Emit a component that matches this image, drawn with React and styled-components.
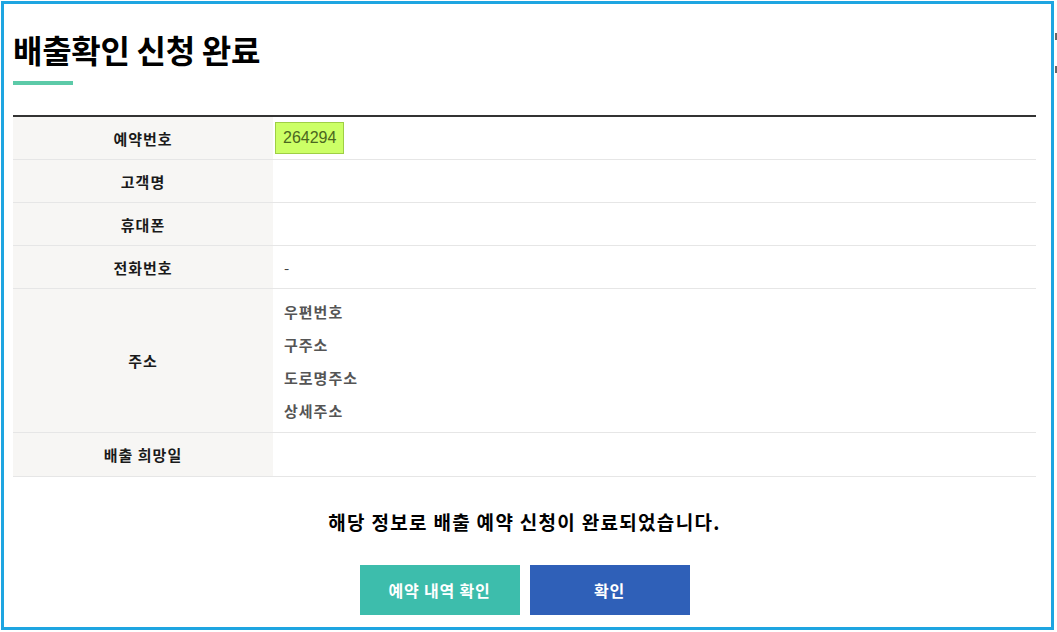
import React from "react";
import styled, { createGlobalStyle } from "styled-components";

// Global reset
const GlobalStyle = createGlobalStyle`
  html, body {
    margin: 0;
    padding: 0;
    background: #ffffff;
  }
  body {
    font-family: "Noto Sans CJK KR", "Noto Sans", sans-serif;
    color: #222;
  }
`;

const Page = styled.div`
  display: flex;
  align-items: flex-start;
  padding: 1px 0 0 1px;
`;

const Frame = styled.div`
  box-sizing: border-box;
  width: 1053px;
  height: 629px;
  border: 3px solid #1ea5e1;
  padding: 25px 15px 0 9px;
  background: #fff;
`;

const EdgeStrip = styled.div`
  display: flex;
  flex-direction: column;
  gap: 26px;
  padding: 32px 0 0 1px;
`;

const EdgeMark = styled.span`
  display: block;
  width: 2px;
  height: 7px;
  background: #666;
`;

const Title = styled.h1`
  margin: 0;
  font-size: 32px;
  line-height: 40px;
  font-weight: 700;
  color: #000;
  letter-spacing: -0.3px;
`;

const TitleBar = styled.div`
  width: 60px;
  height: 4px;
  margin-top: 12px;
  background: #5ccaa8;
`;

const Table = styled.div`
  margin-top: 30px;
  border-top: 2px solid #333;
`;

const Row = styled.div`
  display: grid;
  grid-template-columns: 260px 1fr;
  min-height: ${(p) => p.$height || 42}px;
  border-bottom: 1px solid #e6e6e6;
`;

const Label = styled.div`
  display: flex;
  align-items: center;
  justify-content: center;
  background: #f7f6f4;
  font-size: 15px;
  font-weight: 700;
  letter-spacing: 1px;
  color: #1a1a1a;
`;

const Value = styled.div`
  display: flex;
  align-items: center;
  padding-left: ${(p) => (p.$tight ? 2 : 11)}px;
  font-size: 15px;
  color: #444;
`;

const Badge = styled.span`
  display: inline-flex;
  align-items: center;
  height: 32px;
  box-sizing: border-box;
  padding: 0 7px;
  background: #ccff66;
  border: 1px solid #9fcf45;
  font-family: "Liberation Sans", Arial, sans-serif;
  font-size: 16px;
  color: #4a6620;
`;

const AddressList = styled.div`
  display: flex;
  flex-direction: column;
  padding: 6px 0 5px 11px;
`;

const AddressLine = styled.div`
  line-height: 33px;
  font-size: 15px;
  font-weight: 700;
  letter-spacing: 1px;
  color: #555;
`;

const Message = styled.p`
  margin: 32px 0 0;
  text-align: center;
  font-size: 19px;
  line-height: 26px;
  font-weight: 700;
  color: #000;
  letter-spacing: 1.3px;
`;

const Buttons = styled.div`
  display: flex;
  justify-content: center;
  gap: 10px;
  margin-top: 30px;
`;

const Button = styled.button`
  width: 160px;
  height: 50px;
  border: none;
  background: ${(p) => (p.$primary ? "#2f60b8" : "#3dbdac")};
  color: #fff;
  font-family: "Noto Sans CJK KR", "Noto Sans", sans-serif;
  font-size: 16px;
  font-weight: 700;
  letter-spacing: 0.8px;
  cursor: pointer;
`;

const rows = [
  { label: "예약번호", badge: "264294" },
  { label: "고객명", value: "" },
  { label: "휴대폰", value: "" },
  { label: "전화번호", value: "-" },
];

const addressLines = ["우편번호", "구주소", "도로명주소", "상세주소"];

const App = () => {
  return (
    <>
      <GlobalStyle />
      <Page>
        <Frame>
          <Title>배출확인 신청 완료</Title>
          <TitleBar />
          <Table>
            {rows.map((r) => (
              <Row key={r.label}>
                <Label>{r.label}</Label>
                {r.badge ? (
                  <Value $tight>
                    <Badge>{r.badge}</Badge>
                  </Value>
                ) : (
                  <Value>{r.value}</Value>
                )}
              </Row>
            ))}
            <Row $height={142}>
              <Label>주소</Label>
              <AddressList>
                {addressLines.map((line) => (
                  <AddressLine key={line}>{line}</AddressLine>
                ))}
              </AddressList>
            </Row>
            <Row $height={43}>
              <Label>배출 희망일</Label>
              <Value />
            </Row>
          </Table>
          <Message>해당 정보로 배출 예약 신청이 완료되었습니다.</Message>
          <Buttons>
            <Button>예약 내역 확인</Button>
            <Button $primary>확인</Button>
          </Buttons>
        </Frame>
        <EdgeStrip>
          <EdgeMark />
          <EdgeMark />
        </EdgeStrip>
      </Page>
    </>
  );
};

export default App;
